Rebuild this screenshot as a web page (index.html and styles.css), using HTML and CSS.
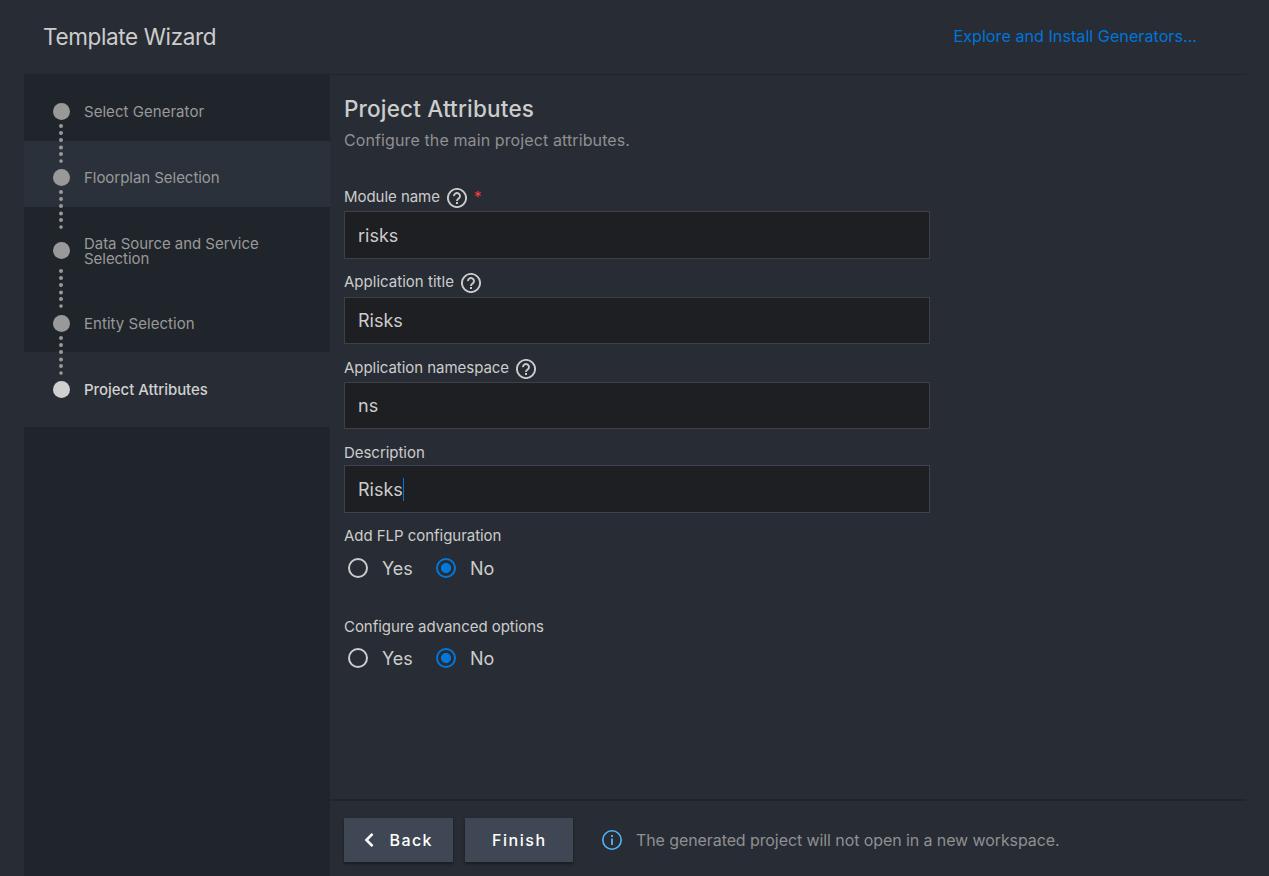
FILE: index.html
```html
<!DOCTYPE html>
<html lang="en">
<head>
<meta charset="utf-8">
<title>Template Wizard</title>
<link rel="stylesheet" href="styles.css">
</head>
<body>
<svg class="defs" width="0" height="0">
  <symbol id="help" viewBox="0 0 20 20"><circle cx="10" cy="10" r="9.1" fill="none" stroke="currentColor" stroke-width="1.9"/><path d="M7 8.1a3 3 0 1 1 4.8 2.3c-1.1.8-1.8 1.2-1.8 2.5" fill="none" stroke="currentColor" stroke-width="1.9"/><rect x="9" y="14" width="2" height="2" fill="currentColor"/></symbol>
  <symbol id="dots" viewBox="0 0 4 40"><g fill="currentColor"><circle cx="2" cy="2" r="2"/><circle cx="2" cy="9" r="2"/><circle cx="2" cy="16.1" r="2"/><circle cx="2" cy="23.4" r="2"/><circle cx="2" cy="30" r="2"/><circle cx="2" cy="37.1" r="1.8"/></g></symbol>
</svg>
<div class="wizard">
  <header class="header">
    <h1 class="title">Template Wizard</h1>
    <a class="explore">Explore and Install Generators...</a>
  </header>
  <div class="main">
    <nav class="steps">
      <div class="step first"><span class="dot"></span><span class="step-name s1">Select Generator</span><svg class="link"><use href="#dots"/></svg></div>
      <div class="step hover"><span class="dot"></span><span class="step-name s2">Floorplan Selection</span><svg class="link"><use href="#dots"/></svg></div>
      <div class="step tall"><span class="dot"></span><span class="step-name s3">Data Source and Service Selection</span><svg class="link"><use href="#dots"/></svg></div>
      <div class="step"><span class="dot"></span><span class="step-name s4">Entity Selection</span><svg class="link"><use href="#dots"/></svg></div>
      <div class="step current"><span class="dot"></span><span class="step-name s5">Project Attributes</span></div>
    </nav>
    <section class="content">
      <div class="form">
        <h2 class="heading">Project Attributes</h2>
        <p class="subtitle">Configure the main project attributes.</p>
        <label class="label l1"><span>Module name</span><svg class="help"><use href="#help"/></svg><span class="required">*</span></label>
        <div class="input tall-input">risks</div>
        <label class="label l2"><span>Application title</span><svg class="help"><use href="#help"/></svg></label>
        <div class="input">Risks</div>
        <label class="label l3"><span>Application namespace</span><svg class="help"><use href="#help"/></svg></label>
        <div class="input">ns</div>
        <label class="label l4"><span>Description</span></label>
        <div class="input tall-input focused">Risks<span class="caret"></span></div>
        <label class="label l5"><span>Add FLP configuration</span></label>
        <div class="radios"><span class="radio"></span><span class="option yes">Yes</span><span class="radio on"></span><span class="option">No</span></div>
        <label class="label l6"><span>Configure advanced options</span></label>
        <div class="radios second"><span class="radio"></span><span class="option yes">Yes</span><span class="radio on"></span><span class="option">No</span></div>
      </div>
      <footer class="footer">
        <button class="button back"><svg class="chevron" viewBox="0 0 10 16"><path d="M8.5 1.8 2.4 8l6.1 6.2" fill="none" stroke="currentColor" stroke-width="2.6"/></svg><span>Back</span></button>
        <button class="button finish">Finish</button>
        <svg class="info" viewBox="0 0 20 20"><circle cx="10" cy="10" r="9.2" fill="none" stroke="currentColor" stroke-width="1.6"/><path d="M10 8.5V15M10 5v2" fill="none" stroke="currentColor" stroke-width="1.8"/></svg>
        <span class="note">The generated project will not open in a new workspace.</span>
      </footer>
    </section>
  </div>
</div>
</body>
</html>
```
FILE: styles.css
```css
* { box-sizing: border-box; }
body { margin: 0; background: #282c34; color: #cccccc; font-family: Inter, "Liberation Sans", sans-serif; }
.defs { display: block; }
.wizard { height: 876px; padding: 0 23px 0 24px; display: flex; flex-direction: column; overflow: hidden; }
.header { height: 74px; flex: none; display: flex; justify-content: space-between; align-items: center; padding: 0 49px 0 19px; }
.title { margin: 0; font-size: 22.5px; font-weight: 400; line-height: 28px; letter-spacing: -0.36px; }
.explore { font-size: 16.2px; line-height: 20px; color: #0074d9; padding-bottom: 2px; }
.main { flex: 1; display: flex; }
.steps { width: 306px; flex: none; background: #20252b; }
.step { position: relative; height: 66px; padding: 4px 50px 0 29px; display: flex; align-items: center; color: #999999; }
.first { height: 67px; padding-top: 8px; }
.hover { background: #2b313a; padding-top: 7px; }
.tall { height: 79px; padding-top: 8px; }
.step:nth-child(4) { padding-top: 9px; }
.current { height: 75px; padding-top: 0; background: #282c34; color: #d0d0d0; }
.dot { width: 17px; height: 17px; flex: none; border-radius: 50%; background: currentColor; margin-right: 14px; }
.step-name { font-size: 15px; line-height: 15px; }
.s1, .s4 { letter-spacing: 0.04px; }
.s2, .s3 { letter-spacing: -0.04px; }
.s5 { font-weight: 500; letter-spacing: -0.04px; }
.link { position: absolute; z-index: 1; left: 35px; top: 50px; width: 4px; height: 40px; }
.hover .link { top: 49px; }
.tall .link { top: 62px; }
.content { flex: 1; display: flex; flex-direction: column; }
.form { flex: 1; padding: 21px 0 0 14px; border-top: 1px solid #21252b; }
.heading { margin: 0; font-size: 22.5px; font-weight: 500; line-height: 26px; letter-spacing: 0.18px; }
.subtitle { margin: 8px 0 0; font-size: 16px; line-height: 20px; letter-spacing: 0.11px; color: #8f9092; }
.label { display: flex; align-items: center; font-size: 15px; line-height: 20px; height: 20px; letter-spacing: -0.04px; }
.l1 { margin-top: 37px; margin-bottom: 4px; }
.l2 { margin-top: 13px; margin-bottom: 5px; letter-spacing: 0.02px; }
.l3 { margin-top: 14px; margin-bottom: 4px; }
.l4 { margin-top: 14px; margin-bottom: 2px; }
.l5 { margin-top: 13px; }
.l6 { margin-top: 38px; }
.help { width: 20px; height: 20px; margin: 2px 0 0 7px; flex: none; }
.required { color: #ff3b3b; margin-left: 7px; }
.input { width: 586px; height: 47px; border: 1px solid #3e4045; background: #1e1f22; padding-left: 13px; font-size: 18px; display: flex; align-items: center; }
.tall-input { height: 48px; }
.focused { border-color: #3d4353; }
.caret { width: 1px; height: 23px; background: #0074d9; }
.radios { display: flex; align-items: center; height: 22px; margin-top: 11px; padding-left: 4px; font-size: 18px; }
.second { margin-top: 10px; }
.radio { width: 20px; height: 20px; border: 2px solid #cccccc; border-radius: 50%; margin-right: 14px; }
.on { border-color: #0078dc; background: radial-gradient(circle, #0078dc 4.7px, transparent 5.3px); }
.yes { width: 54px; }
.footer { height: 77px; flex: none; border-top: 2px solid #21252b; padding: 17px 0 0 14px; display: flex; }
.button { height: 44px; border: 0; padding: 0; background: #404754; color: #ffffff; font-family: inherit; font-size: 16px; font-weight: 500; letter-spacing: 1.4px; box-shadow: 0 2px 3px rgba(0,0,0,.4); display: flex; align-items: center; }
.back { width: 109px; padding-left: 20px; }
.chevron { width: 10px; height: 16px; margin-right: 15.5px; margin-top: -1px; }
.finish { width: 108px; margin-left: 12px; padding-left: 27px; letter-spacing: 1.55px; }
.info { width: 20px; height: 20px; margin: 12px 15px 0 29px; color: #55b3f5; }
.note { margin-top: 12px; margin-left: -1px; font-size: 16px; line-height: 20px; letter-spacing: -0.09px; color: #8f9092; }
```
